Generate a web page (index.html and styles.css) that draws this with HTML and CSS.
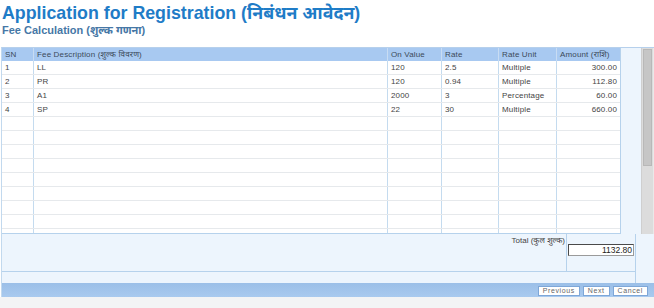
FILE: index.html
```html
<!DOCTYPE html>
<html>
<head>
<meta charset="utf-8">
<link rel="stylesheet" href="styles.css">
</head>
<body>
<div class="page">
  <h1 class="title">Application for Registration (निबंधन आवेदन)</h1>
  <h2 class="subtitle">Fee Calculation (शुल्क गणना)</h2>
  <div class="panel">
    <div class="grid-wrap">
      <div class="grid">
        <div class="row head">
          <div class="c sn">SN</div>
          <div class="c desc">Fee Description (शुल्क विवरण)</div>
          <div class="c onv">On Value</div>
          <div class="c rate">Rate</div>
          <div class="c unit">Rate Unit</div>
          <div class="c amt">Amount (राशि)</div>
        </div>
        <div class="body">
          <div class="row"><div class="c sn">1</div><div class="c desc">LL</div><div class="c onv">120</div><div class="c rate">2.5</div><div class="c unit">Multiple</div><div class="c amt num">300.00</div></div>
          <div class="row"><div class="c sn">2</div><div class="c desc">PR</div><div class="c onv">120</div><div class="c rate">0.94</div><div class="c unit">Multiple</div><div class="c amt num">112.80</div></div>
          <div class="row"><div class="c sn">3</div><div class="c desc">A1</div><div class="c onv">2000</div><div class="c rate">3</div><div class="c unit">Percentage</div><div class="c amt num">60.00</div></div>
          <div class="row"><div class="c sn">4</div><div class="c desc">SP</div><div class="c onv">22</div><div class="c rate">30</div><div class="c unit">Multiple</div><div class="c amt num">660.00</div></div>
          <div class="row"><div class="c sn"></div><div class="c desc"></div><div class="c onv"></div><div class="c rate"></div><div class="c unit"></div><div class="c amt"></div></div>
          <div class="row"><div class="c sn"></div><div class="c desc"></div><div class="c onv"></div><div class="c rate"></div><div class="c unit"></div><div class="c amt"></div></div>
          <div class="row"><div class="c sn"></div><div class="c desc"></div><div class="c onv"></div><div class="c rate"></div><div class="c unit"></div><div class="c amt"></div></div>
          <div class="row"><div class="c sn"></div><div class="c desc"></div><div class="c onv"></div><div class="c rate"></div><div class="c unit"></div><div class="c amt"></div></div>
          <div class="row"><div class="c sn"></div><div class="c desc"></div><div class="c onv"></div><div class="c rate"></div><div class="c unit"></div><div class="c amt"></div></div>
          <div class="row"><div class="c sn"></div><div class="c desc"></div><div class="c onv"></div><div class="c rate"></div><div class="c unit"></div><div class="c amt"></div></div>
          <div class="row"><div class="c sn"></div><div class="c desc"></div><div class="c onv"></div><div class="c rate"></div><div class="c unit"></div><div class="c amt"></div></div>
          <div class="row"><div class="c sn"></div><div class="c desc"></div><div class="c onv"></div><div class="c rate"></div><div class="c unit"></div><div class="c amt"></div></div>
          <div class="row"><div class="c sn"></div><div class="c desc"></div><div class="c onv"></div><div class="c rate"></div><div class="c unit"></div><div class="c amt"></div></div>
        </div>
      </div>
      <div class="strip"></div>
      <div class="scroll"><div class="thumb"></div></div>
    </div>
    <div class="footer">
      <div class="totals">
        <div class="total-label">Total (कुल शुल्क)</div>
        <div class="total-value"><div class="total-box">1132.80</div></div>
      </div>
      <div class="band"></div>
    </div>
    <div class="bar">
      <span class="btn">Previous</span>
      <span class="btn">Next</span>
      <span class="btn">Cancel</span>
    </div>
  </div>
</div>
</body>
</html>
```
FILE: styles.css
```css
* { box-sizing: border-box; }
html, body { margin: 0; padding: 0; }
body {
  width: 654px;
  height: 308px;
  overflow: hidden;
  background: #f3f4f5;
  font-family: "Liberation Sans", Arial, "Noto Sans", sans-serif;
}
.page {
  background: #ffffff;
  padding-top: 4px;
}
.title {
  margin: 0 0 0 2px;
  font-size: 17.8px;
  line-height: 19px;
  font-weight: bold;
  color: #1f7cc7;
}
.subtitle {
  margin: 0 0 0 2px;
  font-size: 11px;
  line-height: 14px;
  font-weight: bold;
  color: #4677a6;
}
.panel {
  margin-top: 10px;
  margin-left: 1px;
  border-left: 1px solid #c2d9ee;
  border-top: 1px solid #b6d0ec;
  background: #edf5fd;
}
.grid-wrap {
  display: flex;
  height: 186px;
}
.grid {
  width: 619px;
  border-right: 1px solid #b6d2ec;
  background: #edf5fd;
}
.row {
  display: flex;
  height: 14px;
  background: #ffffff;
  border-bottom: 1px solid #e6e9ec;
}
.row.head {
  height: 13px;
  background: #a8c9f1;
  border-bottom: none;
}
.body {
  height: 173px;
  overflow: hidden;
  border-bottom: 1px solid #b6d2ec;
}
.c {
  font-size: 8px;
  line-height: 13px;
  color: #444;
  padding: 0 3px;
  border-right: 1px solid #c4dbef;
  white-space: nowrap;
  overflow: hidden;
  letter-spacing: 0.15px;
}
.head .c { color: #3c4a5a; line-height: 13px; border-right: 1px solid #c8dcf3; }
.sn { width: 32px; }
.desc { width: 354px; }
.onv { width: 54px; }
.rate { width: 57px; }
.unit { width: 58px; }
.amt { width: 63px; border-right: none; }
.head .amt { border-right: none; }
.num { text-align: right; }
.strip {
  width: 20px;
  background: #edf5fd;
}
.scroll {
  width: 13px;
  height: 186px;
  background: #dcdcdc;
  border-left: 1px solid #cfcfcf;
  border-right: 1px solid #e9e9e9;
}
.thumb {
  height: 117px;
  margin: 1px 1px 0 1px;
  background: #c6c6c6;
  border: 1px solid #b8b8b8;
}
.footer {
  background: #edf5fd;
}
.totals {
  display: flex;
  height: 38px;
  width: 634px;
  border-right: 1px solid #b6d2ec;
  border-bottom: 1px solid #b6d2ec;
}
.total-label {
  width: 565px;
  text-align: right;
  font-size: 8px;
  line-height: 12px;
  color: #444;
  padding: 1px 1px 0 0;
  border-right: 1px solid #b6d2ec;
}
.total-value {
  flex: 1;
  padding: 10px 0 0 1px;
}
.total-box {
  width: 66px;
  height: 12px;
  background: #ffffff;
  border: 1px solid #4a4a4a;
  border-right-color: #9a9a9a;
  border-bottom-color: #9a9a9a;
  font-size: 8.5px;
  line-height: 10px;
  text-align: right;
  padding-right: 1px;
  color: #222;
}
.band {
  height: 11px;
  width: 634px;
  border-right: 1px solid #b6d2ec;
}
.bar {
  height: 14px;
  background: linear-gradient(#9bbfe8, #a9caef);
  display: flex;
  justify-content: flex-end;
  align-items: flex-end;
  gap: 3px;
  padding: 0 6px 1px 0;
}
.btn {
  display: block;
  height: 10px;
  background: #ffffff;
  border: 1px solid #7ea7d8;
  font-size: 7px;
  line-height: 8px;
  color: #666;
  padding: 0 4px;
  letter-spacing: 0.6px;
}
```
